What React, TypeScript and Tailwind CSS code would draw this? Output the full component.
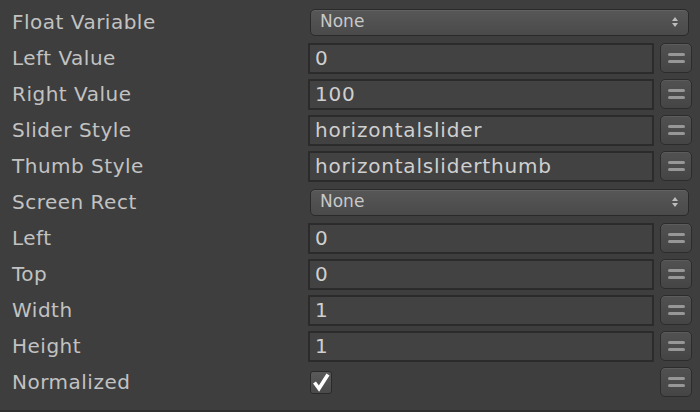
import React from "react";

type Row =
  | { label: string; kind: "dropdown"; value: string }
  | { label: string; kind: "field"; value: string }
  | { label: string; kind: "check" };

const rows: Row[] = [
  { label: "Float Variable", kind: "dropdown", value: "None" },
  { label: "Left Value", kind: "field", value: "0" },
  { label: "Right Value", kind: "field", value: "100" },
  { label: "Slider Style", kind: "field", value: "horizontalslider" },
  { label: "Thumb Style", kind: "field", value: "horizontalsliderthumb" },
  { label: "Screen Rect", kind: "dropdown", value: "None" },
  { label: "Left", kind: "field", value: "0" },
  { label: "Top", kind: "field", value: "0" },
  { label: "Width", kind: "field", value: "1" },
  { label: "Height", kind: "field", value: "1" },
  { label: "Normalized", kind: "check" },
];

function EqButton() {
  return (
    <div className="ml-[6px] flex h-[30px] w-[32px] flex-col items-center justify-center gap-[4px] rounded-[5px] border border-[#2c2c2c] bg-gradient-to-b from-[#515151] to-[#454545] shadow-[inset_0_1px_0_#5c5c5c]">
      <div className="h-[3px] w-[17px] rounded-full bg-[#979797]" />
      <div className="h-[3px] w-[17px] rounded-full bg-[#979797]" />
    </div>
  );
}

function Dropdown({ value }: { value: string }) {
  return (
    <div className="ml-[2px] flex h-[27px] w-[379px] items-center justify-between rounded-[5px] border border-[#2a2a2a] bg-gradient-to-b from-[#575757] to-[#4a4a4a] pl-[9px] pr-[9px] text-[17px] text-[#c8c8c8] shadow-[inset_0_1px_0_#626262]">
      <span>{value}</span>
      <svg width="8" height="12" viewBox="0 0 8 12">
        <path d="M4 1 L7 5 L1 5 Z" fill="#bdbdbd" />
        <path d="M4 11 L7 7 L1 7 Z" fill="#bdbdbd" />
      </svg>
    </div>
  );
}

function Field({ value }: { value: string }) {
  return (
    <div className="flex items-center">
      <div className="flex h-[31px] w-[346px] items-center border-2 border-[#2b2b2b] bg-[#424242] pl-[5px] text-[20px] tracking-[0.8px] text-[#cfcfcf]">
        {value}
      </div>
      <EqButton />
    </div>
  );
}

function Check() {
  return (
    <div className="flex w-[384px] items-center justify-between">
      <div className="ml-[2px] flex h-[23px] w-[22px] items-center justify-center rounded-[3px] border border-[#2a2a2a] bg-gradient-to-b from-[#5a5a5a] to-[#4a4a4a]">
        <svg width="20" height="20" viewBox="0 0 20 20">
          <path d="M3.5 10.5 L8 16.5 L17 2.5" stroke="#ffffff" strokeWidth="3.6" fill="none" strokeLinejoin="miter" strokeLinecap="butt" />
        </svg>
      </div>
      <EqButton />
    </div>
  );
}

export default function App() {
  return (
    <div
      className="h-[412px] w-[700px] overflow-hidden bg-[#3e3e3e]"
      style={{ fontFamily: '"DejaVu Sans", "Liberation Sans", sans-serif' }}
    >
      <div className="flex h-[410px] flex-col pt-[4px]">
        {rows.map((r, i) => (
          <div key={i} className="flex h-[36px] items-center">
            <div className="w-[308px] pl-[12px] text-[20px] tracking-[0.5px] text-[#c2c2c2]">{r.label}</div>
            {r.kind === "dropdown" && <Dropdown value={r.value} />}
            {r.kind === "field" && <Field value={r.value} />}
            {r.kind === "check" && <Check />}
          </div>
        ))}
      </div>
      <div className="h-[2px] bg-[#2f2f2f]" />
    </div>
  );
}
